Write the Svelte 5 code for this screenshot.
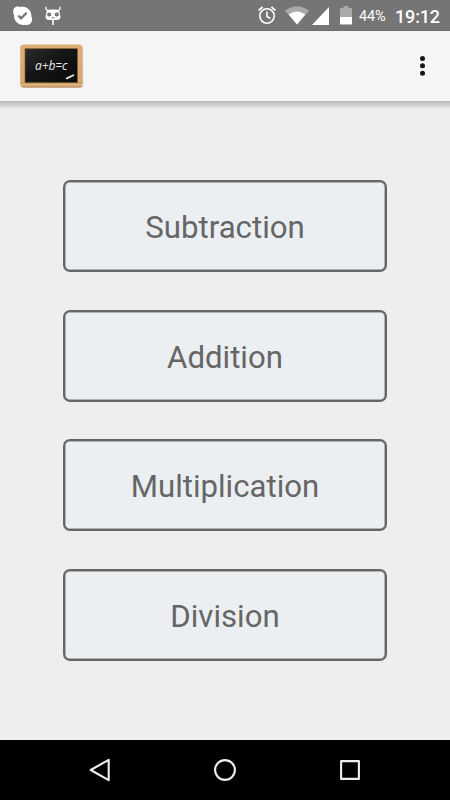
<script>
  const operations = ['Subtraction', 'Addition', 'Multiplication', 'Division'];
</script>

<div class="screen">
  <div class="status">
    <svg class="skype" width="20" height="20" viewBox="0 0 20 20">
      <path fill="#fff" d="M.3 6C-.4 2.8 2.2.3 5 .4 6 .4 6.5.8 7.2 1.1 13-.7 18.9 4 18.3 10.2c.7 1 .9 2 .8 3.4 0 3.8-3.5 6.4-6.9 5.1C6 20.1.5 15.2 1.1 9.2.5 8.3.4 7 .3 6Z" />
      <path fill="none" stroke="#757575" stroke-width="2.3" d="m5.4 9.6 2.7 2.8 5.6-5.6" />
    </svg>
    <svg class="cyan" width="18" height="20" viewBox="0 0 18 20">
      <path fill="none" stroke="#fff" stroke-width="1.2" stroke-linecap="round" d="M3.8 4.6Q1.5 4 2 1.2M14.2 4.6Q16.5 4 16 1.2" />
      <path fill="#fff" d="M2.2 8Q2 3.4 6 3.4h6q4 0 3.8 4.6 2.2 6-3.2 6H5.4Q0 14 2.2 8Z" />
      <circle cx="5.2" cy="8.5" r="2" fill="#666" />
      <circle cx="12.8" cy="8.5" r="2" fill="#666" />
      <circle cx="5.2" cy="8.5" r=".6" fill="#ddd" />
      <circle cx="12.8" cy="8.5" r=".6" fill="#ddd" />
      <path fill="#777" d="M7.5 11.2h3v1h-3z" />
      <path fill="none" stroke="#fff" stroke-width="1.6" d="M9 14v5" />
    </svg>
    <div class="spacer"></div>
    <svg class="alarm" width="18" height="20" viewBox="0 0 18 20">
      <g fill="none" stroke="#fff" stroke-width="1.6">
        <circle cx="9" cy="11" r="7.2" />
        <path d="M9 6.5v5l3.3 2" />
        <path stroke-width="1.8" d="M.6 5.4 4.6 2M17.4 5.4 13.4 2" />
      </g>
    </svg>
    <svg class="wifi" width="24" height="19" viewBox="0 0 24 19">
      <path fill="#a9a9a9" d="M0 4.8Q12-4.4 24 4.8L12 18.5Z" />
      <path fill="#fff" d="M3.7 8.5Q12 2.6 20.3 8.5L12 18.5Z" />
    </svg>
    <svg class="cell" width="17" height="18" viewBox="0 0 17 18"><path fill="#fff" d="M17 0v18H0Z" /></svg>
    <svg class="battery" width="12" height="19" viewBox="0 0 12 19">
      <path fill="#aaa" d="M3.5 0h5v2H11q1 0 1 1v8H0V3q0-1 1-1h2.5Z" />
      <path fill="#fff" d="M0 11h12v6.5q0 1-1 1H1q-1 0-1-1Z" />
    </svg>
    <span class="percent">44%</span>
    <span class="time">19:12</span>
  </div>

  <header>
    <svg class="board" width="66" height="46" viewBox="0 0 66 46">
      <defs>
        <linearGradient id="wood" x2="0" y2="1">
          <stop offset="0" stop-color="#dcae74" />
          <stop offset=".88" stop-color="#d8a86e" />
          <stop offset=".9" stop-color="#c0925a" />
          <stop offset=".93" stop-color="#e5bc84" />
          <stop offset="1" stop-color="#bd8c54" />
        </linearGradient>
        <linearGradient id="slate" x2="1" y2="1">
          <stop offset="0" stop-color="#2c2c2c" />
          <stop offset=".4" stop-color="#171717" />
          <stop offset="1" stop-color="#080808" />
        </linearGradient>
      </defs>
      <rect x="1.2" y="1.4" width="62" height="42.6" rx="3.5" fill="#aaa" opacity=".5" />
      <rect x=".2" y=".4" width="62.3" height="43" rx="3.5" fill="url(#wood)" />
      <rect x="5" y="4.7" width="52.4" height="34" fill="url(#slate)" stroke="#80592d" stroke-width=".7" />
      <text class="chalk" x="15" y="26" textLength="32.5">a+b=c</text>
      <path stroke="#e8e8e8" stroke-width="1.8" stroke-linecap="round" d="m46.8 34.4 6.6-3.1" />
    </svg>
    <svg class="more" width="7" height="22" viewBox="0 0 7 22">
      <circle cx="3.5" cy="3.5" r="2.5" /><circle cx="3.5" cy="10.7" r="2.5" /><circle cx="3.5" cy="18.2" r="2.5" />
    </svg>
  </header>

  <main>
    {#each operations as name}
      <button><span>{name}</span></button>
    {/each}
  </main>

  <nav>
    <svg width="24" height="26" viewBox="0 0 24 26"><path d="M20.7 2.8v20.4L2.7 13Z" /></svg>
    <svg width="24" height="26" viewBox="0 0 24 26"><circle cx="12" cy="13" r="9.9" /></svg>
    <svg width="24" height="26" viewBox="0 0 24 26"><path d="M3.1 4.1h17.8v17.8H3.1Z" /></svg>
  </nav>
</div>

<style>
  .screen {
    width: 450px;
    height: 800px;
    display: flex;
    flex-direction: column;
    overflow: hidden;
    background: #eee;
    font-family: Roboto, sans-serif;
  }
  svg { display: block; flex: none; }
  .status {
    box-sizing: border-box;
    height: 31px;
    display: flex;
    align-items: flex-start;
    padding-left: 13px;
    background: #757575;
    border-bottom: 1px solid #6f6f6f;
    color: #fff;
  }
  .skype { margin-top: 6px; }
  .cyan { margin: 6px 0 0 11px; }
  .spacer { flex: 1; }
  .alarm { margin: 5px 9px 0 0; }
  .wifi { margin: 6px 3px 0 0; }
  .cell { margin: 7px 11px 0 0; }
  .battery { margin: 6px 7px 0 0; }
  .percent { width: 29px; font-size: 14.5px; line-height: 33px; margin-right: 7px; letter-spacing: -0.1px; }
  .time { width: 55px; font-size: 18px; line-height: 33px; font-weight: 500; letter-spacing: -0.15px; }
  header {
    box-sizing: border-box;
    height: 70px;
    flex: none;
    display: flex;
    justify-content: space-between;
    padding: 13px 24px 0 20px;
    background: #f5f5f5;
  }
  .chalk {
    font: italic 12px "Open Sans", sans-serif;
    fill: #e8e8e8;
  }
  .more { margin-top: 11px; fill: #151515; }
  main {
    flex: 1;
    display: flex;
    flex-direction: column;
    align-items: center;
    gap: 37.5px;
    padding-top: 79px;
    background: linear-gradient(#bbb, #c9c9c9 3px, #e0e0e0 6px, #eee 9px);
  }
  button {
    box-sizing: border-box;
    width: 324.6px;
    height: 92px;
    padding: 3px 0 0;
    border: 2px solid #666;
    border-radius: 7px;
    background: #ebeff2;
    box-shadow: inset 0 0 0 0.5px #777;
    color: #666;
    font: 31.2px Roboto, sans-serif;
  }
  nav {
    box-sizing: border-box;
    height: 60px;
    display: flex;
    justify-content: space-between;
    align-items: center;
    padding: 0 88px;
    background: #000;
  }
  nav path, nav circle {
    fill: none;
    stroke: #eee;
    stroke-width: 2.1;
    stroke-linejoin: round;
  }
</style>
